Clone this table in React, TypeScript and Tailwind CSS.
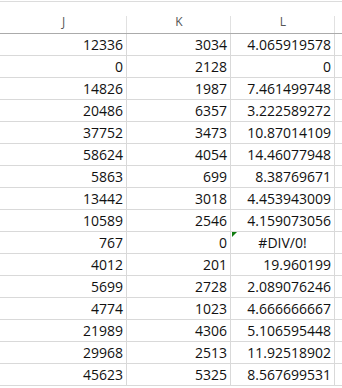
const rows: [string, string, string][] = [
  ["12336", "3034", "4.065919578"],
  ["0", "2128", "0"],
  ["14826", "1987", "7.461499748"],
  ["20486", "6357", "3.222589272"],
  ["37752", "3473", "10.87014109"],
  ["58624", "4054", "14.46077948"],
  ["5863", "699", "8.38769671"],
  ["13442", "3018", "4.453943009"],
  ["10589", "2546", "4.159073056"],
  ["767", "0", "#DIV/0!"],
  ["4012", "201", "19.960199"],
  ["5699", "2728", "2.089076246"],
  ["4774", "1023", "4.666666667"],
  ["21989", "4306", "5.106595448"],
  ["29968", "2513", "11.92518902"],
  ["45623", "5325", "8.567699531"],
];

const cols = "grid grid-cols-[127px_104px_104px_1fr]";

const HeaderCell = ({ label }: { label?: string }) => (
  <div className="relative flex items-center justify-center pt-[8px] text-[12px] text-[#555]">
    {label}
    {label && <span className="absolute right-0 top-[12px] bottom-0 w-px bg-[#e1e1e1]" />}
  </div>
);

export default function App() {
  return (
    <div
      className="w-[342px] h-[388px] overflow-hidden bg-white text-[#111]"
      style={{ fontFamily: '"Open Sans", "Noto Sans", sans-serif' }}
    >
      {/* column headers */}
      <div className={`${cols} h-[34px] border-b border-[#ababab]`}>
        <div className="col-span-4 h-px mt-px bg-[#dcdcdc] -mb-[2px]" />
        <HeaderCell label="J" />
        <HeaderCell label="K" />
        <HeaderCell label="L" />
        <HeaderCell />
      </div>

      {/* data rows */}
      {rows.map(([j, k, l], i) => {
        const isError = l.startsWith("#");
        return (
          <div key={i} className={`${cols} h-[22px] text-[14px] leading-[21px]`}>
            <div className="border-r border-b border-[#d9d9d9] text-right pr-[3px]">{j}</div>
            <div className="border-r border-b border-[#d9d9d9] text-right pr-[3px]">{k}</div>
            <div
              className={`relative border-r border-b border-[#d9d9d9] pr-[3px] ${
                isError ? "text-center pl-[3px]" : "text-right"
              }`}
            >
              {isError && (
                <span className="absolute left-px top-0 w-0 h-0 border-t-[5px] border-r-[5px] border-t-[#107c10] border-r-transparent" />
              )}
              {l}
            </div>
            <div className="border-b border-[#d9d9d9]" />
          </div>
        );
      })}
    </div>
  );
}
